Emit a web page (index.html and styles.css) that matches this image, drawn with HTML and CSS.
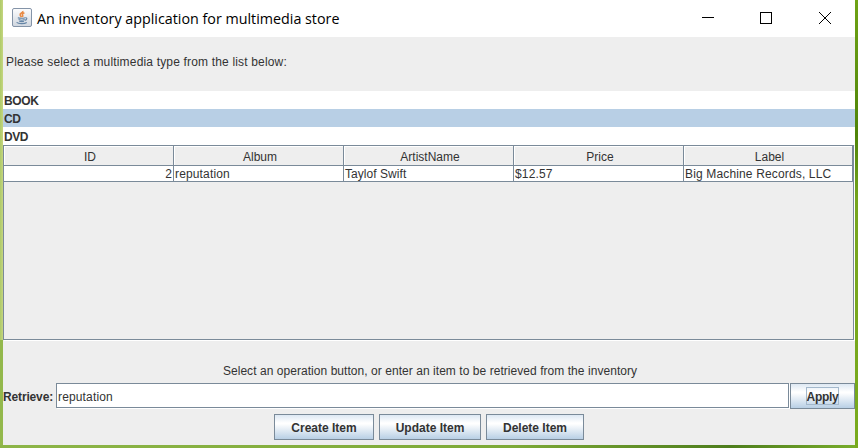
FILE: index.html
```html
<!DOCTYPE html>
<html lang="en">
<head>
<meta charset="utf-8">
<title>An inventory application for multimedia store</title>
<link rel="stylesheet" href="styles.css">
</head>
<body>
<main class="window">
  <header class="titlebar">
    <svg class="app-icon" width="20" height="19" viewBox="0 0 20 19">
      <defs><linearGradient id="tile" x1="0" y1="0" x2="0" y2="1"><stop offset="0" stop-color="#fdfdfe"/><stop offset="1" stop-color="#cfd6df"/></linearGradient></defs>
      <rect x=".5" y=".5" width="19" height="18" rx="1.5" fill="url(#tile)" stroke="#8494a8"/>
      <path d="M10.8 3C11.4 4.8 7.2 5.2 8.2 7.2C8.5 8 9.2 8.5 9.4 9.2M12.4 4.8C10.6 5.6 9.8 6 10.6 7.2C11 7.9 10.8 8.4 10.4 9" fill="none" stroke="#e88a45" stroke-width="1.6"/>
      <path d="M5.8 9.8C7.5 10.5 11.5 10.5 13 9.7M6.6 11.6C8.5 12.3 11 12.3 12.6 11.6M7.2 13.2C9 13.8 10.6 13.8 12 13.2M13.2 9.8C15.6 9.2 15.2 11.8 12.8 12.4M4.6 14.4C6.5 16 12.5 16 14.8 14.5" fill="none" stroke="#6485a6" stroke-width="1.1"/>
    </svg>
    <h1 class="title">An inventory application for multimedia store</h1>
    <svg class="controls" width="130" height="12" viewBox="0 0 130 12" fill="none" stroke="#000">
      <path d="M0 5.5H12"/><rect x="58.500" y=".5" width="11" height="11"/><path d="M117 0L129 12M129 0L117 12"/>
    </svg>
  </header>
  <p class="prompt">Please select a multimedia type from the list below:</p>
  <ul class="types">
    <li>BOOK</li>
    <li class="selected">CD</li>
    <li>DVD</li>
  </ul>
  <section class="scroll">
    <table class="items">
      <colgroup><col class="wide"><col class="wide"><col class="wide"><col class="wide"><col></colgroup>
      <thead><tr><th>ID</th><th>Album</th><th>ArtistName</th><th>Price</th><th>Label</th></tr></thead>
      <tbody><tr><td class="num">2</td><td>reputation</td><td class="artist">Taylof Swift</td><td>$12.57</td><td>Big Machine Records, LLC</td></tr></tbody>
    </table>
  </section>
  <p class="hint">Select an operation button, or enter an item to be retrieved from the inventory</p>
  <div class="retrieve">
    <span class="caption">Retrieve:</span>
    <div class="field">reputation</div>
    <button class="btn apply"><span>Apply</span></button>
  </div>
  <div class="actions">
    <button class="btn create">Create Item</button>
    <button class="btn update">Update Item</button>
    <button class="btn delete">Delete Item</button>
  </div>
</main>
</body>
</html>
```
FILE: styles.css
```css
* { box-sizing: border-box; }
body {
  margin: 0;
  width: 858px;
  height: 448px;
  overflow: hidden;
  padding: 0 3px 3px;
  background:
    linear-gradient(90deg, #aecb68, #c5d580) 0 0 / 3px 340px no-repeat,
    linear-gradient(#6fa315, #4f8409 30%, #76a51d 45%, #78aa1c) 855px 0 / 3px 448px no-repeat,
    linear-gradient(90deg, #8db548, #7da936 60%, #4d7d1c 85%, #79ad2b) 0 445px / 858px 3px no-repeat,
    #93b84c;
  font: 12px/18px "Liberation Sans", Arial, sans-serif;
  color: #333;
}
p, h1, ul { margin: 0; padding: 0; }
.window {
  width: 852px;
  height: 445px;
  background: #eee;
  display: flex;
  flex-direction: column;
}
.titlebar {
  height: 37px;
  flex: none;
  background: #fff;
  display: flex;
  align-items: flex-start;
  padding: 0 23px 0 9px;
}
.app-icon { margin: 8px 5px 0 0; }
.title {
  margin-top: 9px;
  font: 400 14.3px/20px "Open Sans", "Noto Sans", sans-serif;
  color: #000;
  white-space: nowrap;
}
.controls { margin: 12px 0 0 auto; }
.prompt { height: 54px; padding: 16px 0 0 3px; letter-spacing: .17px; }
.types { list-style: none; background: #fff; font-weight: 700; letter-spacing: -.4px; }
.types li { height: 18px; line-height: 20px; padding-left: 1px; }
.types .selected { background: #b8cfe5; }
.scroll {
  width: 851px;
  height: 195px;
  border: 1px solid #7a8a99;
  flex: none;
  box-shadow: 1px 1px #fff;
}
.items { width: 849px; table-layout: fixed; border-collapse: separate; border-spacing: 0; }
.wide { width: 170px; }
.items th, .items td { border-right: 1px solid #7a8a99; border-bottom: 1px solid #7a8a99; white-space: nowrap; }
.items th { height: 20px; line-height: 15px; padding: 4px 0 0 3px; font-weight: 400; background: #eee; box-shadow: inset 1px 1px #fff; }
.items td { height: 16px; line-height: 14px; padding: 1px 1px 0; background: #fff; letter-spacing: .15px; }
.items .num { text-align: right; letter-spacing: 0; }
.items .artist { letter-spacing: .05px; }
.hint { margin-top: 22px; padding-left: 2px; text-align: center; letter-spacing: .05px; }
.retrieve { display: flex; height: 26px; margin-top: 3px; flex: none; }
.caption { width: 53px; font-weight: 700; line-height: 28px; letter-spacing: -.15px; }
.field {
  width: 733px;
  height: 25px;
  padding: 1px 0 0 1px;
  line-height: 24px;
  letter-spacing: .15px;
  background: #fff;
  border: 1px solid #7a8a99;
  box-shadow: 1px 1px #fff;
}
.btn {
  height: 26px;
  padding: 1px 0 0;
  font: 700 12px/24px "Liberation Sans", Arial, sans-serif;
  color: #333;
  border: 1px solid #7a8a99;
  border-radius: 0;
  background: linear-gradient(#dde8f3, #fff 33%, #fff 37%, #b8cfe5);
}
.apply { width: 65px; margin-left: 1px; letter-spacing: -.3px; }
.apply span { display: inline-block; height: 18px; line-height: 18px; border: 1px solid #a3b8cc; }
.actions { display: flex; gap: 5px; margin: 5px 0 0 271px; }
.create { width: 100px; }
.update { width: 102px; }
.delete { width: 98px; }
```
